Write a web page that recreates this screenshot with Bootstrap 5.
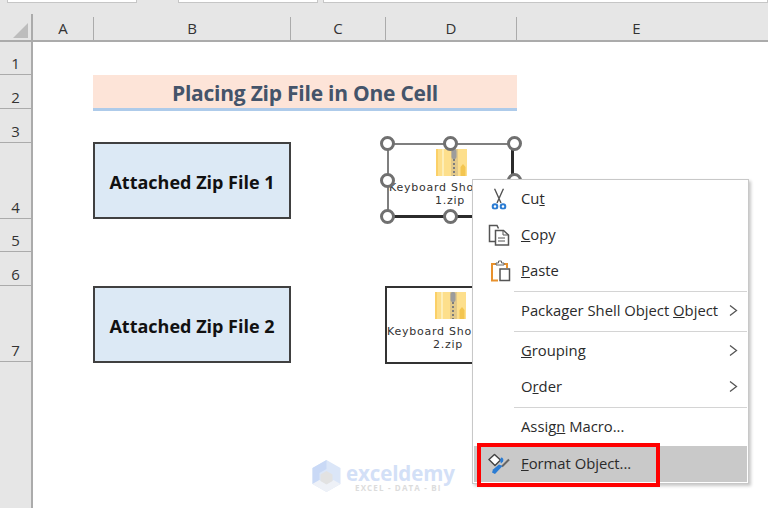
<!DOCTYPE html>
<html lang="en">
<head>
<meta charset="utf-8">
<link href="https://cdn.jsdelivr.net/npm/bootstrap@5.3.0/dist/css/bootstrap.min.css" rel="stylesheet">
<style>
html,body{height:100%;}
body{width:768px;height:508px;overflow:hidden;background:#fff;font-family:"Open Sans","Noto Sans",sans-serif;color:#222;}
.topstrip{height:14px;background:#e6e6e6;}
.fbox{height:3px;background:#fff;border:1px solid #c6c6c6;border-top:0;}
.fb1{margin-left:7px;width:130px;}
.fb2{margin-left:41px;width:140px;}
.fb3{margin-left:5px;flex:1;}
.colbar{height:28px;background:#e6e6e6;border-bottom:2px solid #ababab;}
.corner{width:33px;border-right:2px solid #ababab;}
.corner i{display:block;width:0;height:0;margin:9px 0 0 13px;border-style:solid;border-width:0 0 15px 15px;border-color:transparent transparent #bdbdbd transparent;}
.colh{border-right:1px solid #ababab;font-size:15px;color:#333;line-height:26px;text-align:center;margin-top:3px;height:23px;}
.colh span{display:block;margin-top:-2px;}
.rowbar{width:33px;background:#e6e6e6;border-right:2px solid #ababab;height:466px;}
.rowh{border-bottom:1px solid #ababab;font-size:15px;color:#333;line-height:1;padding-bottom:3px;}
.sheet{width:735px;height:466px;position:relative;background:#fff;overflow:hidden;}
.titlebar{position:absolute;left:60px;top:33px;width:424px;height:36px;background:#fde4d8;border-bottom:3px solid #aecbea;font-weight:700;font-size:21px;color:#44546a;text-align:center;line-height:36px;letter-spacing:-.24px;}
.bluebox{position:absolute;left:60px;width:198px;height:77px;background:#dce9f5;border:2px solid #404040;font-weight:700;font-size:18px;color:#111;line-height:76px;text-align:center;letter-spacing:0;}
.zipobj{position:absolute;background:#fff;font-family:"DejaVu Sans",sans-serif;font-size:11px;letter-spacing:.75px;line-height:13px;color:#333;white-space:nowrap;overflow:hidden;}
.zipobj svg{display:block;position:absolute;}
.lab{position:absolute;left:0;right:0;}
.lab-c{text-align:center;}
.obj1{left:354px;top:101px;width:127px;height:75px;border:solid;border-width:2px 3px 3px 2px;border-color:#7f7f7f #2b2b2b #2b2b2b #7f7f7f;}
.obj2{left:352px;top:244px;width:133px;height:78px;border:2px solid #333;}
.hdl{position:absolute;width:15px;height:15px;border-radius:50%;background:#fff;border:3px solid #707070;}
.ctx{position:absolute;left:439px;top:137px;width:277px;height:305px;background:#fff;border:1px solid #c8c8c8;box-shadow:2px 2px 3px rgba(0,0,0,.22);font-size:14.8px;color:#2b2b2b;padding:1px 0;}
.mi{height:36px;padding-left:48px;padding-right:10px;position:relative;}
.mi>span{margin-top:-2px;}
.mi svg.ic{position:absolute;top:50%;transform:translateY(-50%);}
.msep{height:1px;background:#d4d4d4;margin:2px 1px 1px 41px;}
.mi.act{background:#c9c9c9;margin:1px;padding-left:47px;}
.chev{margin-left:auto;margin-top:-2px;}
.redbox{position:absolute;left:444px;top:401px;width:183px;height:44px;border:4px solid #f00;}
.wm{position:absolute;left:279px;top:418px;}
.wmt{position:absolute;left:34px;top:4px;font-weight:700;font-size:20.5px;color:#d3e0f7;line-height:18px;letter-spacing:-.1px;}
.wms{position:absolute;left:43px;top:22px;font-size:8px;color:#dcdcdc;letter-spacing:1.15px;white-space:nowrap;line-height:11px;font-weight:700;}
</style>
</head>
<body>
<div class="topstrip d-flex align-items-start">
  <div class="fbox fb1"></div><div class="fbox fb2"></div><div class="fbox fb3"></div>
</div>
<div class="colbar d-flex">
  <div class="corner"><i></i></div>
  <div class="colh" style="width:61px"><span>A</span></div>
  <div class="colh" style="width:197px"><span>B</span></div>
  <div class="colh" style="width:95px"><span>C</span></div>
  <div class="colh" style="width:131px"><span>D</span></div>
  <div class="colh" style="width:239px;border-right:0"><span>E</span></div>
</div>
<div class="d-flex">
  <div class="rowbar d-flex flex-column">
    <div class="rowh d-flex align-items-end justify-content-center" style="height:33px">1</div>
    <div class="rowh d-flex align-items-end justify-content-center" style="height:34px">2</div>
    <div class="rowh d-flex align-items-end justify-content-center" style="height:34px">3</div>
    <div class="rowh d-flex align-items-end justify-content-center" style="height:76px">4</div>
    <div class="rowh d-flex align-items-end justify-content-center" style="height:33px">5</div>
    <div class="rowh d-flex align-items-end justify-content-center" style="height:34px">6</div>
    <div class="rowh d-flex align-items-end justify-content-center" style="height:76px">7</div>
  </div>
  <div class="sheet">
    <div class="titlebar">Placing Zip File in One Cell</div>
    <div class="bluebox" style="top:100px">Attached Zip File 1</div>
    <div class="bluebox" style="top:244px">Attached Zip File 2</div>

    <div class="zipobj obj1">
      <svg style="left:47px;top:4px" width="31" height="27" viewBox="0 0 31 27"><rect width="31" height="27" fill="#fddf8c"/><rect width="2" height="27" fill="#fbd067"/><rect x="6" width="2" height="27" fill="#fdeeb8"/><rect x="15" width="7" height="27" fill="#e2c98a"/><rect x="15.500" y="0" width="5" height="10" rx="2" fill="#9c9c9c"/><path d="M18 10v17" stroke="#7d7d7d" stroke-width="2" stroke-dasharray="2 2"/><path d="M27 15l2.500 3v9h-5v-9z" fill="#f3c550"/></svg>
      <div class="lab" style="top:36px">Keyboard Shortcut</div>
      <div class="lab lab-c" style="top:49px">1.zip</div>
    </div>
    <div class="zipobj obj2">
      <svg style="left:48px;top:4px" width="31" height="27" viewBox="0 0 31 27"><rect width="31" height="27" fill="#fddf8c"/><rect width="2" height="27" fill="#fbd067"/><rect x="6" width="2" height="27" fill="#fdeeb8"/><rect x="15" width="7" height="27" fill="#e2c98a"/><rect x="15.500" y="0" width="5" height="10" rx="2" fill="#9c9c9c"/><path d="M18 10v17" stroke="#7d7d7d" stroke-width="2" stroke-dasharray="2 2"/><path d="M27 15l2.500 3v9h-5v-9z" fill="#f3c550"/></svg>
      <div class="lab" style="top:37px">Keyboard Shortcut</div>
      <div class="lab" style="top:50px;padding-left:46px">2.zip</div>
    </div>
    <div class="hdl" style="left:347px;top:94px"></div>
    <div class="hdl" style="left:410px;top:94px"></div>
    <div class="hdl" style="left:474px;top:94px"></div>
    <div class="hdl" style="left:347px;top:131px"></div>
    <div class="hdl" style="left:474px;top:131px"></div>
    <div class="hdl" style="left:347px;top:167px"></div>
    <div class="hdl" style="left:410px;top:167px"></div>

    <div class="ctx">
      <div class="mi d-flex align-items-center"><svg class="ic" style="left:18px" width="16" height="21" viewBox="0 0 16 21"><path d="M3.500 0l6.500 14.500M12.500 0L6 14.500" stroke="#555" stroke-width="1.400" fill="none"/><circle cx="4" cy="18" r="2.300" fill="none" stroke="#2b7cd3" stroke-width="2"/><circle cx="12" cy="18" r="2.300" fill="none" stroke="#2b7cd3" stroke-width="2"/></svg><span>Cu<u>t</u></span></div>
      <div class="mi d-flex align-items-center"><svg class="ic" style="left:15px" width="22" height="22" viewBox="0 0 22 22"><path d="M7 17.500H1.500V1.500H9l1.500 3" fill="none" stroke="#555" stroke-width="1.500"/><path d="M7.500 6.500h8l5 4.500v10H7.500z" fill="#fff" stroke="#555" stroke-width="1.500"/><path d="M15 6.500v4.500h5.500M10 14h7M10 17h7" fill="none" stroke="#555"/></svg><span><u>C</u>opy</span></div>
      <div class="mi d-flex align-items-center"><svg class="ic" style="left:18px" width="20" height="22" viewBox="0 0 20 22"><path d="M7 20.500H1V4h15v4" fill="none" stroke="#e8912d" stroke-width="2"/><path d="M5 5V3h2.500V1h3v2H13v2z" fill="#fff" stroke="#666"/><rect x="9" y="9" width="9.500" height="11.500" fill="#fff" stroke="#555" stroke-width="1.500"/></svg><span><u>P</u>aste</span></div>
      <div class="msep"></div>
      <div class="mi d-flex align-items-center"><span>Packager Shell Object <u>O</u>bject</span><svg class="chev" width="9" height="11" viewBox="0 0 9 11"><path d="M1 .5l6.500 5L1 10.500" fill="none" stroke="#555" stroke-width="1.300"/></svg></div>
      <div class="msep"></div>
      <div class="mi d-flex align-items-center"><span><u>G</u>rouping</span><svg class="chev" width="9" height="11" viewBox="0 0 9 11"><path d="M1 .5l6.500 5L1 10.500" fill="none" stroke="#555" stroke-width="1.300"/></svg></div>
      <div class="mi d-flex align-items-center"><span>O<u>r</u>der</span><svg class="chev" width="9" height="11" viewBox="0 0 9 11"><path d="M1 .5l6.500 5L1 10.500" fill="none" stroke="#555" stroke-width="1.300"/></svg></div>
      <div class="msep"></div>
      <div class="mi d-flex align-items-center"><span>Assig<u>n</u> Macro...</span></div>
      <div class="mi act d-flex align-items-center"><svg class="ic" style="left:14px" width="22" height="21" viewBox="0 0 22 21"><path d="M1 6L6.500 1l6 5.500-5.500 5.500z" fill="#fff" stroke="#444" stroke-width="1.400"/><path d="M13 4c2 0 3 2 2 4l-2 2-1-3z" fill="#2b7cd3"/><path d="M21 6l-7 7" stroke="#666" stroke-width="2"/><path d="M14.500 12.500L7 20.500 4 19l1-3 6-5z" fill="#2b7cd3"/></svg><span><u>F</u>ormat Object...</span></div>
    </div>
    <div class="redbox"></div>

    <div class="wm">
      <svg width="29" height="32" viewBox="0 0 29 32"><path d="M14.500 0l14 8v16l-14 8-14-8V8z" fill="#dbe6f8"/><path d="M14.500 0L.5 8v16l7-4v-7l7-4z" fill="#c9d9f6"/><path d="M.5 24l14 8 14-8-7-4-7 4-7-4z" fill="#eef1f7"/><path d="M14.500 11l6 3.500v6.500l-6 3.500-6-3.500v-6.500z" fill="#e2e2e2"/></svg>
      <div class="wmt">exceldemy</div>
      <div class="wms">EXCEL - DATA - BI</div>
    </div>
  </div>
</div>
</body>
</html>
